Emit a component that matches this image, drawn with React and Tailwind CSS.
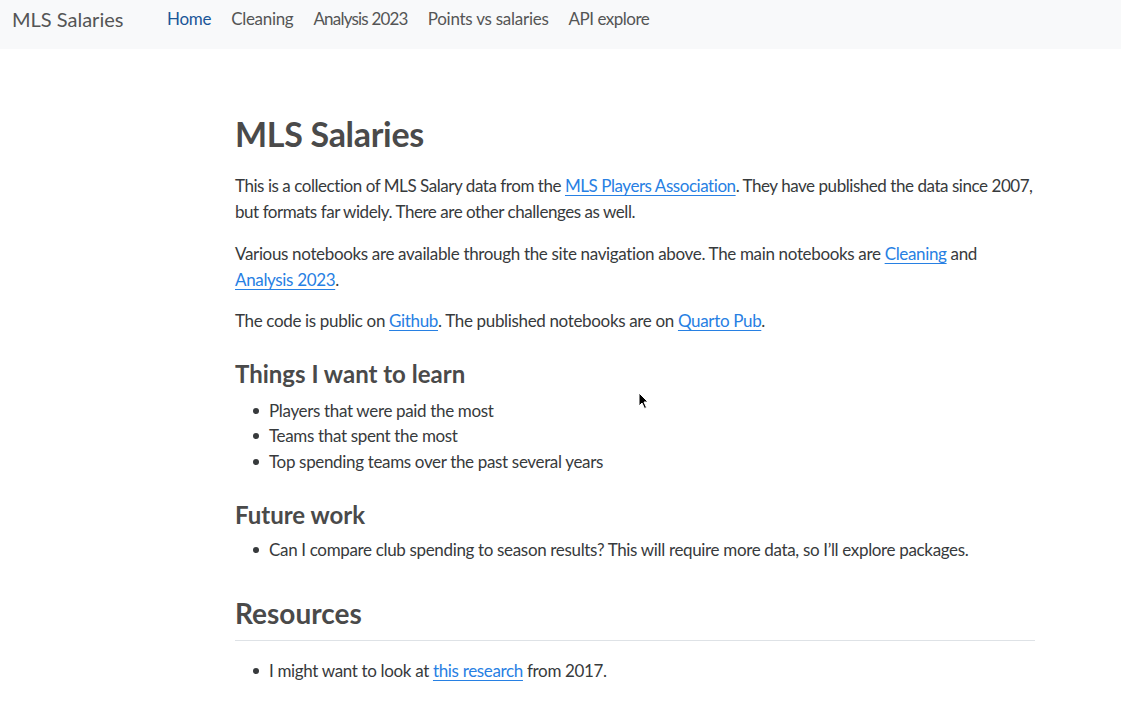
import React from "react";

const font = { fontFamily: "Lato, 'Noto Sans', sans-serif" };

function A({ children }) {
  return <a href="#" className="text-[#2780e3] underline underline-offset-[3px] decoration-1">{children}</a>;
}

function Li({ children }) {
  return (
    <li className="flex items-start">
      <span className="w-[34px] shrink-0 flex justify-end pr-[10px] pt-[10px]"><span className="block w-[6px] h-[6px] rounded-full bg-[#373a3c]"></span></span>
      <span>{children}</span>
    </li>
  );
}

export default function App() {
  return (
    <div className="min-h-[721px] bg-white text-[#373a3c] text-[17px] leading-[25.5px] tracking-[-0.34px] relative" style={font}>
      <nav className="h-[49px] bg-[#f8f9fa] flex items-start pt-[6px] tracking-[-0.2px]">
        <div className="pl-[12px] text-[20px] leading-[26px] text-[#545555] w-[157px] tracking-normal">MLS Salaries</div>
        <div className="flex text-[17px] leading-[26px] text-[#545555]">
          <a className="px-[10px] text-[#1a5698] tracking-[-0.3px]">Home</a>
          <a className="px-[10px] tracking-[-0.3px]">Cleaning</a>
          <a className="px-[10px] tracking-[-0.8px]">Analysis 2023</a>
          <a className="px-[10px] tracking-[-0.25px]">Points vs salaries</a>
          <a className="px-[10px] tracking-[-0.5px]">API explore</a>
        </div>
      </nav>
      <main className="ml-[235px] w-[800px]">
        <h1 className="mt-[64px] text-[34px] leading-[41px] font-bold text-[#4a4a4a] tracking-[-0.3px]">MLS Salaries</h1>
        <p className="mt-[19px] whitespace-nowrap tracking-[-0.45px]">This is a collection of MLS Salary data from the <A>MLS Players Association</A>. They have published the data since 2007,<br />but formats far widely. There are other challenges as well.</p>
        <p className="mt-[17px] whitespace-nowrap">Various notebooks are available through the site navigation above. The main notebooks are <A>Cleaning</A> and<br /><A>Analysis 2023</A>.</p>
        <p className="mt-[16px]">The code is public on <A>Github</A>. The published notebooks are on <A>Quarto Pub</A>.</p>
        <h3 className="mt-[25px] text-[24px] leading-[29px] font-bold text-[#4a4a4a] tracking-normal">Things I want to learn</h3>
        <ul className="mt-[10px]">
          <Li>Players that were paid the most</Li>
          <Li>Teams that spent the most</Li>
          <Li>Top spending teams over the past several years</Li>
        </ul>
        <h3 className="mt-[26px] text-[24px] leading-[29px] font-bold text-[#4a4a4a] tracking-normal">Future work</h3>
        <ul className="mt-[8px]">
          <Li>Can I compare club spending to season results? This will require more data, so I’ll explore packages.</Li>
        </ul>
        <h2 className="mt-[34px] text-[28px] leading-[32px] font-bold text-[#4a4a4a] pb-[11px] border-b border-[#dee2e6] tracking-normal">Resources</h2>
        <ul className="mt-[17px]">
          <Li>I might want to look at <A>this research</A> from 2017.</Li>
        </ul>
      </main>
      <svg className="absolute left-[638px] top-[392px]" width="12" height="18" viewBox="0 0 12 18">
        <path d="M1 1 L1 14 L4 11 L6.5 16.5 L8.5 15.5 L6 10 L10 10 Z" fill="#000" stroke="#fff" strokeWidth="1" />
      </svg>
    </div>
  );
}
